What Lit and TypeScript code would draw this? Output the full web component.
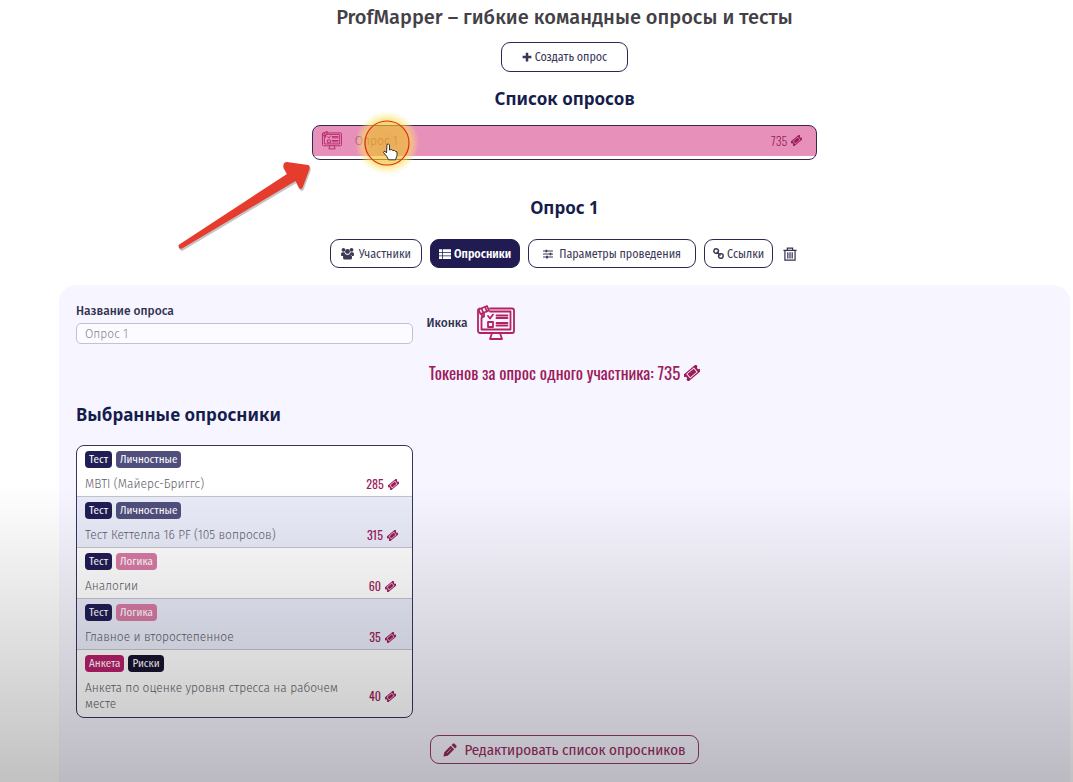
import { LitElement, html, css, svg } from "lit";
import { customElement, state } from "lit/decorators.js";

interface Tag { text: string; kind: string }
interface Survey { title: string; cost: number; tags: Tag[] }

const TEST: Tag = { text: "Тест", kind: "navy" };
const surveys: Survey[] = [
  { title: "MBTI (Майерс-Бриггс)", cost: 285, tags: [TEST, { text: "Личностные", kind: "slate" }] },
  { title: "Тест Кеттелла 16 PF (105 вопросов)", cost: 315, tags: [TEST, { text: "Личностные", kind: "slate" }] },
  { title: "Аналогии", cost: 60, tags: [TEST, { text: "Логика", kind: "pink" }] },
  { title: "Главное и второстепенное", cost: 35, tags: [TEST, { text: "Логика", kind: "pink" }] },
  { title: "Анкета по оценке уровня стресса на рабочем месте", cost: 40, tags: [{ text: "Анкета", kind: "crimson" }, { text: "Риски", kind: "ink" }] },
];

const ticket = (size: number) => html`<svg class="ticket" width=${size} height=${size} viewBox="0 0 16 16" aria-hidden="true">
  <g transform="rotate(-40 8 8)">
    <path fill="currentColor" fill-rule="evenodd" d="M-.5 3.800H16.500V6.500A1.500 1.500 0 0 0 16.500 9.500V12.200H-.5V9.500A1.500 1.500 0 0 0-.5 6.500ZM3 5V11H13V5Z"/>
    <rect x="3.900" y="5.800" width="8.200" height="4.400" fill="currentColor"/>
  </g></svg>`;

const monitor = (w: number, h: number) => html`<svg width=${w} height=${h} viewBox="0 0 38 36" fill="none" stroke="currentColor" stroke-width="1.800" stroke-linejoin="round" stroke-linecap="round" aria-hidden="true">
  <path d="M13 3.500H35a2 2 0 0 1 2 2V26a2 2 0 0 1-2 2H3a2 2 0 0 1-2-2V5.500a2 2 0 0 1 1.500-2"/>
  <path d="M13 6.500H33.500V24.500H4.500V13"/>
  <path d="M1.500 4.500 10 1l2 4.500-8.500 3.500ZM4.500 3.500l2 4.500M8 2l2 4.500M5 9v3.500l2-1V8.500"/>
  <path d="M15 28 13 34H25L23 28"/>
  <path d="m11 11 2 2.500 3-4"/>
  <path d="M11 17H16V22H11Z"/>
  <path d="M19.500 10.500H30.500M19.500 13H30.500M19.500 18H30.500M19.500 20.500H30.500"/>
</svg>`;

const icon = (size: number, body: unknown) =>
  html`<svg width=${size} height=${size} viewBox="0 0 16 16" fill="currentColor" aria-hidden="true">${body}</svg>`;

const glyphs = {
  plus: svg`<path d="M6 1h4v5h5v4H10v5H6V10H1V6h5Z"/>`,
  people: svg`<circle cx="3" cy="3.500" r="2.300"/><circle cx="13" cy="3.500" r="2.300"/><circle cx="8" cy="5.500" r="3"/><path d="M0 10V8.500Q0 6.500 2 6.500H4.200Q5 8.800 6 9.300Q3.500 9.500 3.200 11H1Q0 11 0 10ZM16 10V8.500Q16 6.500 14 6.500H11.800Q11 8.800 10 9.300Q12.500 9.500 12.800 11H15Q16 11 16 10ZM2.500 13.500V12Q2.500 9.200 6 9.200Q8 10.300 10 9.200Q13.500 9.200 13.500 12V13.500Q13.500 15.500 11.500 15.500H4.500Q2.500 15.500 2.500 13.500Z"/>`,
  list: svg`<path d="M0 1.500H4V5.200H0ZM5 1.500H16V5.200H5ZM0 6.200H4V9.900H0ZM5 6.200H16V9.900H5ZM0 10.900H4V14.600H0ZM5 10.900H16V14.600H5Z"/>`,
  sliders: svg`<path d="M0 2.300H16V3.900H0ZM0 7.200H16V8.800H0ZM0 12.100H16V13.700H0Z"/><path d="M4 1h2.800v4.200H4ZM10.500 5.900h2.800v4.200H10.500ZM5 10.800h2.800V15H5Z"/>`,
  link: svg`<g fill="none" stroke="currentColor" stroke-width="2.200"><rect x="1.300" y="1.300" width="6.500" height="6.500" rx="2.800" transform="rotate(10 5 5)"/><rect x="8.300" y="8.300" width="6.500" height="6.500" rx="2.800" transform="rotate(10 11 11)"/><path d="m5.500 5.500 5.500 5.500"/></g>`,
  trash: svg`<path fill="none" stroke="currentColor" stroke-width="1.400" d="M.5 3.800H15.500M5 3.500V1.200H11V3.500M2.200 4V15H13.800V4M5.500 6V13M8 6V13M10.500 6V13"/>`,
  pencil: svg`<path d="M.5 15.500 1.500 10.500 8.800 3.200 12.800 7.200 5.500 14.500ZM9.800 2.200 11.200.8Q12.200 0 13.200.8L15.200 2.800Q16 3.800 15.200 4.800L13.800 6.200Z"/><path d="m4.500 11.500 5-5" stroke="#e5cfdc" stroke-width=".8"/>`,
};

@customElement("app-root")
export class AppRoot extends LitElement {
  @state() private tab = 1;

  static styles = css`
    :host {
      display: block;
      position: relative;
      overflow: hidden;
      min-height: 100vh;
      box-sizing: border-box;
      padding: 4px 3px 0 59px;
      background: #fff;
      color: #3b3a55;
      font-family: "Fira Sans", "Noto Sans", sans-serif;
      font-size: 12px;
      line-height: 16px;
    }
    * { box-sizing: border-box; }
    h1, h2 { margin: 0; text-align: center; }
    h1 { color: #434047; font-size: 20px; line-height: 26px; font-weight: 500; }
    h2 { color: #151d4c; font-family: "Noto Sans", sans-serif; font-size: 17px; line-height: 24px; font-weight: 700; }
    button { font: inherit; color: inherit; cursor: pointer; margin: 0; }
    svg { flex: none; display: block; }
    .page { display: flex; flex-direction: column; align-items: center; }
    .outline {
      display: flex; align-items: center; justify-content: center; gap: 3px;
      height: 30px; padding: 0 8px;
      border: 1px solid #2b2855; border-radius: 9px; background: #fff;
      font-family: "Fira Sans Condensed", "Fira Sans", "Noto Sans", sans-serif;
      font-size: 12px; white-space: nowrap;
    }
    .create { width: 127px; margin: 12px 0 15px; color: #37355a; }
    .entry {
      position: relative;
      display: flex; align-items: center;
      width: 50%; height: 35px; margin: 14px 0 36px; padding: 0 14px 4px 9px;
      border: 1px solid #37284f; border-radius: 8px;
      background: linear-gradient(#e790ba 30px, #fff 30px);
      color: #b52a6d; text-align: left;
    }
    .entry-name { flex: 1; margin-left: 13px; color: #8c4468; font-weight: 300; }
    .tokens {
      display: inline-flex; align-items: center; gap: 4px;
      font-family: Oswald, "Roboto Condensed", Roboto, sans-serif;
      font-size: 12px; font-weight: 400; color: #9c1c5b;
    }
    .entry .tokens { font-weight: 300; }
    .halo { position: absolute; left: 42px; top: -15px; pointer-events: none; }
    .tabs { display: flex; align-items: center; margin: 19px 0 17px; gap: 8px; }
    .tabs .outline { height: 29px; }
    .tabs .first { gap: 5px; padding: 0 10px; }
    .tabs .wide { gap: 6px; padding: 0 14px; }
    .tabs .active { background: #201b51; border-color: #201b51; color: #fff; font-weight: 600; }
    .trash { display: flex; padding: 0 2px; border: 0; background: none; color: #353252; }
    .panel {
      align-self: stretch;
      padding: 17px 17px 40px;
      min-height: 497px;
      border-radius: 17px;
      background: #f7f5ff;
    }
    .form { display: grid; grid-template-columns: minmax(0, 35fr) minmax(0, 65fr); gap: 13px; }
    .field { display: flex; flex-direction: column; gap: 3px; }
    .label { padding-top: 1px; font-weight: 500; color: #323150; }
    input {
      height: 21px; padding: 0 8px;
      border: 1px solid #c3c1d1; border-radius: 5px; background: #fcfbff;
      font: inherit; font-weight: 300; color: #85838f; outline: none;
    }
    .field input { margin-top: 1px; }
    .picker { display: flex; align-items: center; gap: 9px; color: #b52264; }
    .picker .label { padding: 0; }
    .total { justify-content: center; width: 100%; margin: 17px 0 18px; font-size: 17px; line-height: 24px; }
    .panel h2 { text-align: left; }
    .cards {
      width: calc((100% - 13px) * .35);
      margin: 18px 0 17px; padding: 0; list-style: none; overflow: hidden;
      border: 1px solid #38355f; border-radius: 8px; background: #fff;
    }
    .card { padding: 5px 8px 4px; border-bottom: 1px solid #c3c3cd; }
    .card:nth-child(even) { background: #e9ebf9; }
    .card:last-child { border-bottom: 0; padding-bottom: 5px; }
    .tags { display: flex; gap: 4px; }
    .tag {
      padding: 0 4px; border-radius: 4px; color: #fff;
      font-family: "Fira Sans Condensed", "Fira Sans", "Noto Sans", sans-serif;
      font-size: 11px; line-height: 17px; font-weight: 400;
    }
    .navy { background: #211d55; }
    .slate { background: #504e7c; }
    .pink { background: #d77aa5; }
    .crimson { background: #b81f6b; }
    .ink { background: #17132f; }
    .line { display: flex; align-items: center; margin-top: 8px; color: #5e5c69; font-weight: 300; }
    .line .name { flex: 1; padding-right: 20px; }
    .line .tokens { justify-content: center; width: 44px; line-height: 16px; }
    .edit { margin: 0 auto; height: 29px; padding: 0 12px; gap: 7px; background: none; border-color: #97386a; color: #9a2a62; font-size: 15px; }
    .shade {
      position: absolute; left: 0; right: 0; bottom: 0; height: 320px; pointer-events: none;
      background: linear-gradient(rgba(0, 0, 0, 0), rgba(0, 0, 0, .26));
    }
    .arrow { position: absolute; left: 170px; top: 147px; pointer-events: none; }
  `;

  private tabClass(i: number, extra = "") {
    return `outline ${extra} ${this.tab === i ? "active" : ""}`;
  }

  render() {
    const arrow = "M8.500 98 117 27 113.500 21Q112.500 15 117 15L138 18Q140.500 18.500 139.500 22L132.500 41Q130 43.500 128.500 40L125.500 34 12 101.500Q8.500 103 8.500 98Z";
    return html`
      <main class="page">
        <h1>ProfMapper – гибкие командные опросы и тесты</h1>
        <button class="outline create">${icon(10, glyphs.plus)}Создать опрос</button>
        <h2>Список опросов</h2>
        <button class="entry">
          ${monitor(20, 19)}
          <span class="entry-name">Опрос 1</span>
          <span class="tokens">735 ${ticket(11)}</span>
          <svg class="halo" width="64" height="64" viewBox="0 0 64 64" aria-hidden="true">
            <defs><radialGradient id="glow">
              <stop offset="0" stop-color="#eebb22" stop-opacity=".65"/>
              <stop offset=".65" stop-color="#f0c42c" stop-opacity=".65"/>
              <stop offset=".75" stop-color="#f8e05a" stop-opacity=".6"/>
              <stop offset="1" stop-color="#fdf08a" stop-opacity="0"/>
            </radialGradient></defs>
            <circle cx="32" cy="32" r="32" fill="url(#glow)"/>
            <circle cx="32" cy="32" r="22" fill="none" stroke="#e02a20" stroke-width="1.200"/>
            <path d="M32 33.500q1.700-1.500 2.500.5V39l1.800-.5 1.500 1 1.700 0 1 1 1.500.3v4l-1.500 4H33.500L31.500 45l-3-3.500q.2-1.700 1.700-1.200L31.500 42Z" fill="#fff" stroke="#222" stroke-width=".9"/>
          </svg>
        </button>
        <h2>Опрос 1</h2>
        <nav class="tabs">
          <button class=${this.tabClass(0, "first")} @click=${() => (this.tab = 0)}>${icon(13, glyphs.people)}Участники</button>
          <button class=${this.tabClass(1)} @click=${() => (this.tab = 1)}>${icon(12, glyphs.list)}Опросники</button>
          <button class=${this.tabClass(2, "wide")} @click=${() => (this.tab = 2)}>${icon(10, glyphs.sliders)}Параметры проведения</button>
          <button class=${this.tabClass(3)} @click=${() => (this.tab = 3)}>${icon(11, glyphs.link)}Ссылки</button>
          <button class="trash" aria-label="Удалить">${icon(14, glyphs.trash)}</button>
        </nav>
        <section class="panel">
          <div class="form">
            <div class="field">
              <label class="label" for="name">Название опроса</label>
              <input id="name" type="text" value="Опрос 1" />
            </div>
            <div class="picker"><span class="label">Иконка</span>${monitor(38, 36)}</div>
          </div>
          <div class="tokens total">Токенов за опрос одного участника: 735 ${ticket(16)}</div>
          <h2>Выбранные опросники</h2>
          <ul class="cards">
            ${surveys.map((s) => html`
              <li class="card">
                <div class="tags">${s.tags.map((t) => html`<span class="tag ${t.kind}">${t.text}</span>`)}</div>
                <div class="line"><span class="name">${s.title}</span><span class="tokens">${s.cost} ${ticket(11)}</span></div>
              </li>`)}
          </ul>
          <button class="outline edit">${icon(14, glyphs.pencil)}Редактировать список опросников</button>
        </section>
      </main>
      <div class="shade"></div>
      <svg class="arrow" width="150" height="110" viewBox="0 0 150 110" aria-hidden="true">
        <path d=${arrow} transform="translate(1 2)" fill="#c4c4c4"/>
        <path d=${arrow} fill="#e63c2e"/>
      </svg>
    `;
  }
}
